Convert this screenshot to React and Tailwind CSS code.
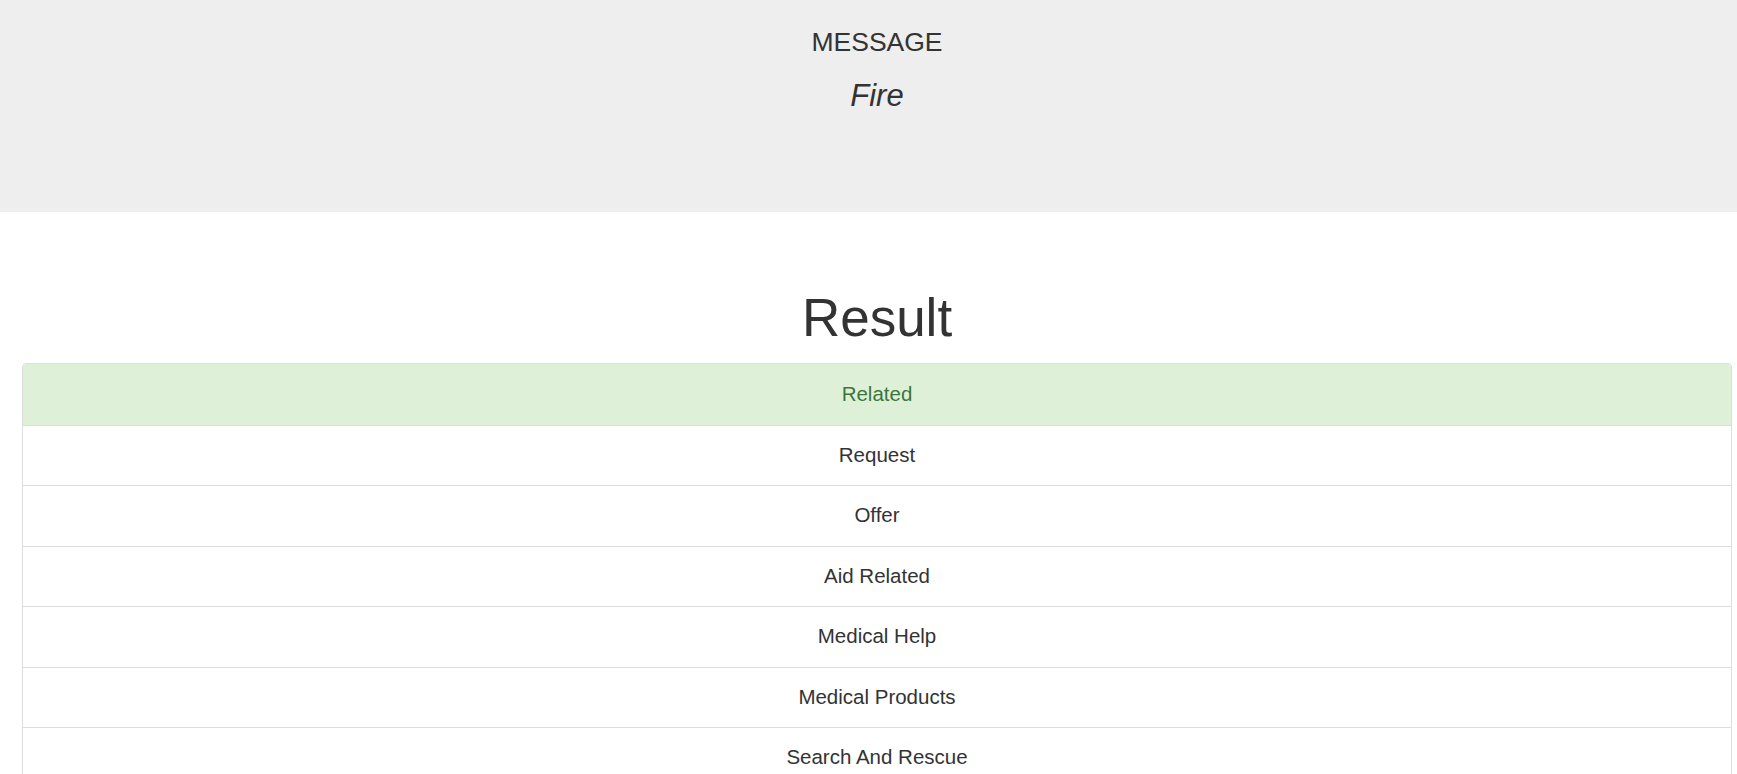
const categories = [
  { name: 'Related', hit: true },
  { name: 'Request' },
  { name: 'Offer' },
  { name: 'Aid Related' },
  { name: 'Medical Help' },
  { name: 'Medical Products' },
  { name: 'Search And Rescue' },
  { name: 'Security' },
  { name: 'Military' },
];

export default function App() {
  return (
    <div className="min-h-screen bg-white text-[#333] font-['Liberation_Sans',Arial,sans-serif]">
      {/* Message banner */}
      <div className="h-[212px] bg-[#eeeeee] pt-[25px]">
        <div className="ml-[22px] mr-[5px] flex flex-col items-center">
          <h3 className="text-[26.5px] leading-[34px]">MESSAGE</h3>
          <p className="text-[31px] italic leading-[40px] mt-[17px]">Fire</p>
        </div>
      </div>

      {/* Result */}
      <div className="ml-[22px] mr-[5px]">
        <h1 className="text-[53px] leading-[60px] text-center mt-[76px] mb-[15px]">Result</h1>
        <ul className="border border-[#dddddd] rounded-t-[4px] overflow-hidden">
          {categories.map((c, i) => (
            <li
              key={c.name}
              className={
                'h-[60.5px] flex items-center justify-center text-[20.5px] ' +
                (i > 0 ? 'border-t border-[#dddddd] ' : '') +
                (c.hit ? 'bg-[#dff0d8] text-[#3c763d]' : 'bg-white')
              }
            >
              {c.name}
            </li>
          ))}
        </ul>
      </div>
    </div>
  );
}
